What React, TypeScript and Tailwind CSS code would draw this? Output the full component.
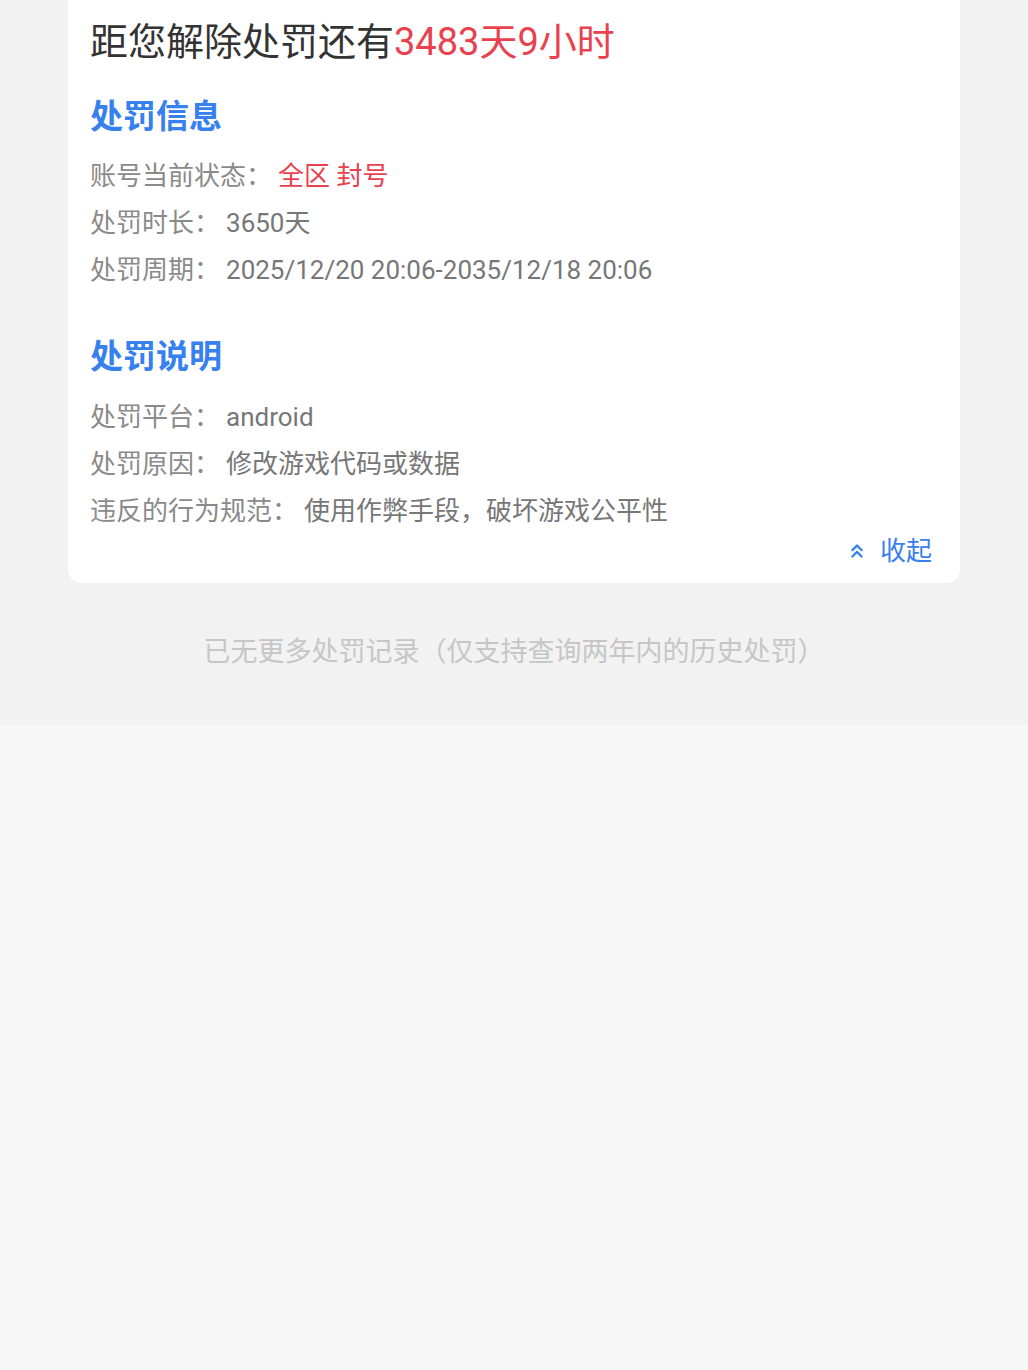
import { ChevronsUp } from 'lucide-react';

const FONT = "font-['Roboto','Noto_Sans_CJK_SC',sans-serif]";

function Row({ label, value, red }: { label: string; value: string; red?: boolean }) {
  return (
    <div className="flex items-center h-[47px] text-[26px]">
      <span className="text-[#8a8a8a]">{label}：</span>
      <span className={`ml-[6px] ${red ? 'text-[#e9414e]' : 'text-[#777777]'}`}>{value}</span>
    </div>
  );
}

function Heading({ children }: { children: React.ReactNode }) {
  return <h2 className="h-[44px] leading-[44px] text-[33px] font-bold text-[#3680f0]">{children}</h2>;
}

export default function App() {
  return (
    <div className={`min-h-[1370px] bg-[#f7f7f7] ${FONT}`}>
      <div className="bg-[#f2f2f2] px-[68px] pb-[55px]">
        <div className="bg-white rounded-b-[14px] pl-[22px] pr-[28px] pt-[18px] pb-[16px]">
          <p className="h-[48px] leading-[48px] text-[38px] text-[#333333]">
            距您解除处罚还有<span className="text-[#e9414e]">3483天9小时</span>
          </p>

          <div className="mt-[29px]">
            <Heading>处罚信息</Heading>
          </div>
          <div className="mt-[14px]">
            <Row label="账号当前状态" value="全区 封号" red />
            <Row label="处罚时长" value="3650天" />
            <Row label="处罚周期" value="2025/12/20 20:06-2035/12/18 20:06" />
          </div>

          <div className="mt-[41px]">
            <Heading>处罚说明</Heading>
          </div>
          <div className="mt-[15px]">
            <Row label="处罚平台" value="android" />
            <Row label="处罚原因" value="修改游戏代码或数据" />
            <Row label="违反的行为规范" value="使用作弊手段，破坏游戏公平性" />
          </div>

          <div className="flex justify-end items-center h-[32px] text-[26px] text-[#3680f0]">
            <ChevronsUp size={22} strokeWidth={2.5} className="mr-[12px]" />
            <span>收起</span>
          </div>
        </div>

        <p className="mt-[51px] h-[36px] leading-[36px] text-center text-[27px] text-[#c6c6c6]">
          已无更多处罚记录（仅支持查询两年内的历史处罚）
        </p>
      </div>
    </div>
  );
}
